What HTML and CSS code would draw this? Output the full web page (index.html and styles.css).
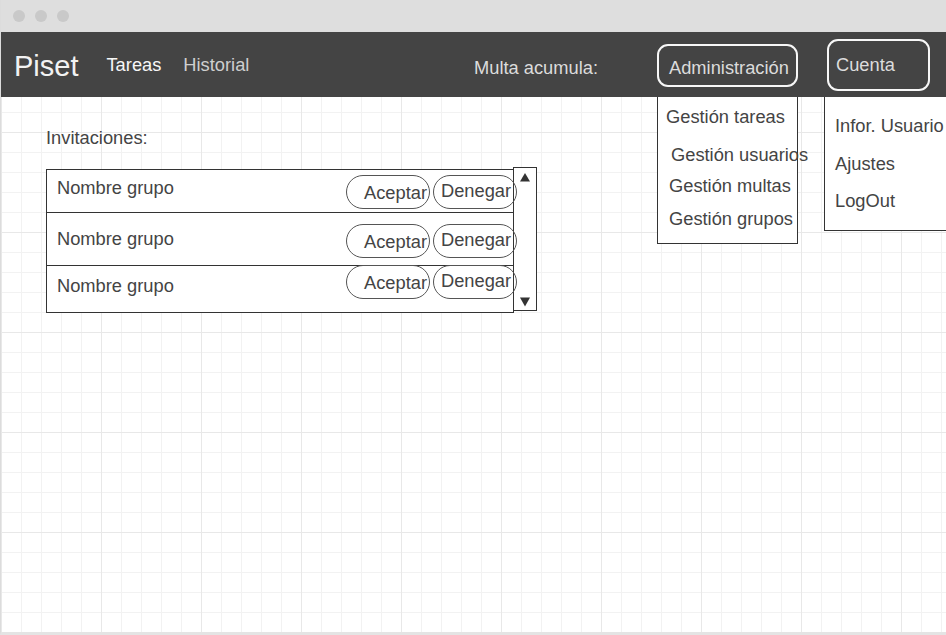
FILE: index.html
```html
<!DOCTYPE html>
<html lang="es">
<head>
<meta charset="utf-8">
<title>Piset</title>
<link rel="stylesheet" href="styles.css">
</head>
<body>
<div class="window">
  <div class="titlebar">
    <span class="dot"></span><span class="dot"></span><span class="dot"></span>
  </div>
  <div class="app">
    <nav class="navbar">
      <span class="brand">Piset</span>
      <a class="nav-link nav-link-active" href="#">Tareas</a>
      <a class="nav-link" href="#">Historial</a>
      <span class="fine">Multa acumula:</span>
      <div class="menu menu-admin">
        <button class="nav-btn nav-btn-admin" type="button">Administración</button>
        <div class="dropdown dropdown-admin">
          <span class="dd-item dd-tareas">Gestión tareas</span>
          <span class="dd-item dd-usuarios">Gestión usuarios</span>
          <span class="dd-item dd-multas">Gestión multas</span>
          <span class="dd-item dd-grupos">Gestión grupos</span>
        </div>
      </div>
      <div class="menu menu-account">
        <button class="nav-btn nav-btn-account" type="button">Cuenta</button>
        <div class="dropdown dropdown-account">
          <span class="dd-item dd-info">Infor. Usuario</span>
          <span class="dd-item dd-ajustes">Ajustes</span>
          <span class="dd-item dd-logout">LogOut</span>
        </div>
      </div>
    </nav>
    <main class="content">
      <p class="section-label">Invitaciones:</p>
      <div class="invites">
        <div class="invite-list">
          <div class="invite-row row-a">
            <span class="group-name">Nombre grupo</span>
            <div class="actions">
              <button class="pill pill-accept" type="button">Aceptar</button>
              <button class="pill pill-deny" type="button">Denegar</button>
            </div>
          </div>
          <div class="invite-row row-b">
            <span class="group-name">Nombre grupo</span>
            <div class="actions">
              <button class="pill pill-accept" type="button">Aceptar</button>
              <button class="pill pill-deny" type="button">Denegar</button>
            </div>
          </div>
          <div class="invite-row row-c">
            <span class="group-name">Nombre grupo</span>
            <div class="actions">
              <button class="pill pill-accept" type="button">Aceptar</button>
              <button class="pill pill-deny" type="button">Denegar</button>
            </div>
          </div>
        </div>
        <div class="scrollbar">
          <svg class="arrow" width="10" height="10" viewBox="0 0 10 10"><polygon points="5,1 10,9.5 0,9.5"/></svg>
          <svg class="arrow" width="10" height="10" viewBox="0 0 10 10"><polygon points="0,0.5 10,0.5 5,9.5"/></svg>
        </div>
      </div>
    </main>
  </div>
</div>
</body>
</html>
```
FILE: styles.css
```css
* { box-sizing: border-box; }

html, body {
  margin: 0;
  padding: 0;
}

body {
  width: 946px;
  height: 635px;
  overflow: hidden;
  background: #fff;
  font-family: "Liberation Sans", Arial, sans-serif;
  --text: 18.3px;
}

.window {
  width: 946px;
  height: 635px;
  display: flex;
  flex-direction: column;
  border-left: 1px solid #dcdcdc;
  border-bottom: 3px solid #e4e4e4;
}

.titlebar {
  flex: none;
  height: 32px;
  background: #dedede;
  display: flex;
  align-items: center;
  gap: 10px;
  padding-left: 12px;
}

.dot {
  width: 12px;
  height: 12px;
  border-radius: 50%;
  background: #c9c9c9;
}

.app {
  flex: 1;
  background-color: #fff;
  background-image:
    linear-gradient(to right, #e8e8e8 1px, transparent 1px),
    linear-gradient(to bottom, #e8e8e8 1px, transparent 1px),
    linear-gradient(to right, #f2f2f2 1px, transparent 1px),
    linear-gradient(to bottom, #f2f2f2 1px, transparent 1px);
  background-size: 100px 100px, 100px 100px, 20px 20px, 20px 20px;
}

/* ---------- navbar ---------- */
.navbar {
  height: 65px;
  background: #444;
  display: flex;
  align-items: center;
  padding: 0 16px 0 13px;
}

.brand {
  font-size: 29px;
  line-height: 34px;
  color: #f2f2f2;
  margin-top: 2px;
  margin-right: 6px;
}

.nav-link {
  font-size: var(--text);
  line-height: 20px;
  color: #cfcfcf;
  text-decoration: none;
  margin-left: 22px;
}

.nav-link-active {
  color: #f7f7f7;
}

.fine {
  margin-left: auto;
  margin-top: 7px;
  font-size: var(--text);
  line-height: 20px;
  color: #dcdcdc;
}

.menu {
  position: relative;
  align-self: stretch;
  display: flex;
  align-items: center;
}

.menu-admin {
  margin-left: 59px;
  padding-top: 2px;
}

.menu-account {
  margin-left: 29px;
}

.nav-btn {
  font-family: inherit;
  font-size: var(--text);
  line-height: 20px;
  color: #dcdcdc;
  background: transparent;
  border: 2px solid #f7f7f7;
  border-radius: 11px;
  text-align: left;
  white-space: nowrap;
  margin: 0;
}

.nav-btn-admin {
  width: 141px;
  height: 43px;
  padding: 12px 0 7px 10px;
}

.nav-btn-account {
  width: 103px;
  height: 52px;
  padding: 14px 0 14px 7px;
}

/* ---------- dropdown menus ---------- */
.dropdown {
  position: absolute;
  top: 100%;
  left: 0;
  z-index: 5;
  background: #fff;
  border: 1px solid #333;
  border-top: none;
  color: #444;
  font-size: var(--text);
  line-height: 20px;
  white-space: nowrap;
}

.dd-item {
  display: block;
}

.dropdown-admin {
  width: 141px;
  height: 147px;
}

.dd-tareas { margin-top: 10px; padding-left: 8px; }
.dd-usuarios { margin-top: 18px; padding-left: 13px; }
.dd-multas { margin-top: 11px; padding-left: 11px; }
.dd-grupos { margin-top: 13px; padding-left: 11px; }

.dropdown-account {
  left: -3px;
  width: 140px;
  height: 134px;
  padding-left: 10px;
}

.dd-info { margin-top: 19px; }
.dd-ajustes { margin-top: 18px; }
.dd-logout { margin-top: 17px; }

/* ---------- content ---------- */
.content {
  padding: 31px 0 0 45px;
  color: #444;
}

.section-label {
  margin: 0 0 21px;
  font-size: var(--text);
  line-height: 20px;
}

.invites {
  display: flex;
  align-items: flex-start;
}

.invite-list {
  width: 468px;
  border: 1px solid #333;
  background: #fff;
}

.invite-row {
  display: flex;
  align-items: flex-start;
  padding-left: 10px;
}

.invite-row + .invite-row {
  border-top: 1px solid #333;
}

.group-name {
  font-size: var(--text);
  line-height: 20px;
  white-space: nowrap;
}

.actions {
  position: relative;
  z-index: 1;
  display: flex;
  gap: 3px;
  margin-left: auto;
  margin-right: -4px;
}

.row-a { height: 42px; }
.row-a .group-name { margin-top: 8px; }
.row-a .actions { margin-top: 5px; }

.row-b { height: 53px; }
.row-b .group-name { margin-top: 16px; }
.row-b .actions { margin-top: 11px; }

.row-c { height: 47px; }
.row-c .group-name { margin-top: 10px; }
.row-c .actions { margin-top: -1px; }

.pill {
  width: 84px;
  height: 34px;
  margin: 0;
  font-family: inherit;
  font-size: var(--text);
  line-height: 20px;
  color: #444;
  background: transparent;
  border: 1px solid #555;
  border-radius: 17px;
  text-align: left;
  white-space: nowrap;
}

.pill-accept { padding: 7px 0 5px 17px; }
.pill-deny { padding: 5px 0 7px 7px; }

.scrollbar {
  width: 24px;
  height: 144px;
  margin: -2px 0 0 -1px;
  border: 1px solid #333;
  background: #fff;
  display: flex;
  flex-direction: column;
  justify-content: space-between;
  align-items: center;
  padding: 4px 0 3px;
}

.arrow {
  display: block;
  fill: #333;
}
```
